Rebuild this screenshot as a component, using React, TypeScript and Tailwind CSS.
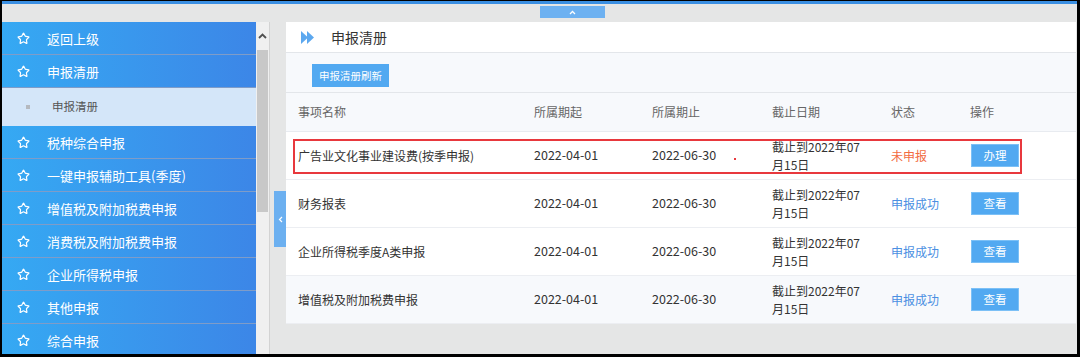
import { Star } from "lucide-react";

const MENU_TOP = ["返回上级", "申报清册"];
const MENU_REST = [
  "税种综合申报",
  "一键申报辅助工具(季度)",
  "增值税及附加税费申报",
  "消费税及附加税费申报",
  "企业所得税申报",
  "其他申报",
  "综合申报",
];

type Row = {
  name: string;
  status: string;
  done: boolean;
};

const ROWS: Row[] = [
  { name: "广告业文化事业建设费(按季申报)", status: "未申报", done: false },
  { name: "财务报表", status: "申报成功", done: true },
  { name: "企业所得税季度A类申报", status: "申报成功", done: true },
  { name: "增值税及附加税费申报", status: "申报成功", done: true },
];

const GRID = "grid grid-cols-[236px_118px_120px_119px_79px_1fr] px-[12px]";

function MenuItem({ label }: { label: string }) {
  return (
    <div className="flex h-[33px] shrink-0 items-center border-b border-[#7f9cc8] pl-[15px] text-[13px] text-white">
      <Star size={13} strokeWidth={2.2} className="shrink-0" />
      <span className="ml-[17px] leading-none">{label}</span>
    </div>
  );
}

export default function App() {
  return (
    <div className="h-[357px] w-[1080px] bg-black pb-[3px] pl-[2px] pr-[3px] pt-[1px] font-['Noto_Sans_CJK_SC','Noto_Sans',sans-serif]">
      <div className="flex h-full flex-col bg-[#e5e6e6]">
        {/* top blue strip + collapse tab */}
        <div className="h-[3px] bg-[#3a8fe2]" />
        <div className="h-[18px] shrink-0 pl-[538px] pt-[2px]">
          <div className="flex h-[12px] w-[65px] items-center justify-center bg-[#6db1f1]">
            <svg width="7" height="5" viewBox="0 0 7 5">
              <path d="M1 4 L3.5 1.5 L6 4" stroke="white" strokeWidth="1.3" fill="none" />
            </svg>
          </div>
        </div>

        <div className="flex min-h-0 flex-1">
          {/* sidebar menu */}
          <div className="flex w-[254px] shrink-0 flex-col overflow-hidden bg-linear-to-r from-[#35a9f3] to-[#3c86e7]">
            {MENU_TOP.map((m) => (
              <MenuItem key={m} label={m} />
            ))}
            <div className="flex h-[38px] shrink-0 items-center bg-[#d4e6f9] pl-[24px] text-[11.5px] text-[#555]">
              <span className="h-[4px] w-[4px] bg-[#b5b9bf]" />
              <span className="ml-[22px]">申报清册</span>
            </div>
            {MENU_REST.map((m) => (
              <MenuItem key={m} label={m} />
            ))}
          </div>

          {/* scrollbar */}
          <div className="flex w-[14px] shrink-0 flex-col border-r border-[#d3d3d3] bg-[#f0f0f0]">
            <div className="flex h-[28px] items-center justify-center">
              <svg width="9" height="6" viewBox="0 0 9 6">
                <path d="M1 5 L4.5 1.5 L8 5" stroke="#505050" strokeWidth="1.8" fill="none" />
              </svg>
            </div>
            <div className="mx-[1px] h-[162px] bg-[#c8c8c8]" />
          </div>

          {/* side collapse tab */}
          <div className="w-[16px] shrink-0 pl-[4px] pt-[169px]">
            <div className="flex h-[56px] w-[12px] items-center justify-center bg-[#6cb0f0]">
              <svg width="5" height="7" viewBox="0 0 5 7">
                <path d="M4 1 L1.5 3.5 L4 6" stroke="white" strokeWidth="1.2" fill="none" />
              </svg>
            </div>
          </div>

          {/* main panel */}
          <div className="mr-[1px] flex flex-1 flex-col self-start bg-white">
            <div className="flex h-[31px] items-center border-b border-[#e3e6ea] pl-[15px]">
              <svg width="14" height="13" viewBox="0 0 14 13">
                <polygon points="0,0 7,6.5 0,13" fill="#5ca8ef" />
                <polygon points="6,0 13,6.5 6,13" fill="#5ca8ef" />
              </svg>
              <span className="ml-[16px] text-[14px] text-[#333]">申报清册</span>
            </div>

            <div className="h-[40px] border-b border-[#e3e6ea] bg-[#f7f9fc] pl-[26px] pt-[8px]">
              <button className="h-[23px] w-[77px] bg-[#52a9f1] text-[10.5px] text-white">
                申报清册刷新
              </button>
            </div>

            <div className={`${GRID} h-[39px] items-center border-b border-[#e8ebf0] bg-[#f7f9fc] text-[12px] text-[#666]`}>
              <span>事项名称</span>
              <span>所属期起</span>
              <span>所属期止</span>
              <span>截止日期</span>
              <span>状态</span>
              <span>操作</span>
            </div>

            {ROWS.map((r, i) => (
              <div
                key={r.name}
                className={`${GRID} relative h-[48px] items-center border-b border-[#eceef2] text-[12px] text-[#333] ${
                  i === 3 ? "bg-[#f7f9fc]" : "bg-white"
                }`}
              >
                <span>{r.name}</span>
                <span className="text-[12.5px]">2022-04-01</span>
                <span className="text-[12.5px]">2022-06-30</span>
                <span className="w-[92px] leading-[18px]">截止到2022年07月15日</span>
                <span className={r.done ? "text-[#4b8fe2]" : "text-[#f26b3f]"}>{r.status}</span>
                <div className="pl-[1px]">
                  <button className="h-[23px] w-[48px] border border-[#7cc0f6] bg-[#52a9f1] text-[11.5px] text-white">
                    {r.done ? "查看" : "办理"}
                  </button>
                </div>
                {i === 0 && (
                  <>
                    <div className="pointer-events-none absolute left-[7px] top-[7px] h-[35px] w-[729px] border-2 border-[#e8383d]" />
                    <div className="absolute left-[448px] top-[26px] h-[2px] w-[2px] bg-[#e8383d]" />
                  </>
                )}
              </div>
            ))}
          </div>
        </div>
      </div>
    </div>
  );
}
